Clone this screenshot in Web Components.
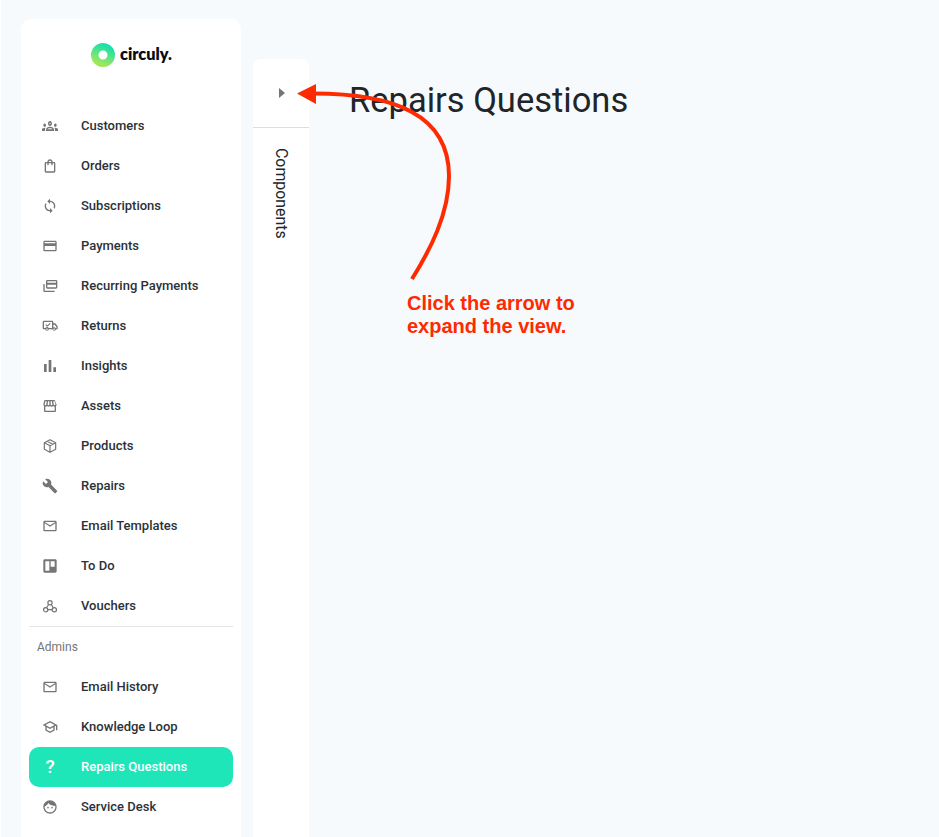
<!DOCTYPE html>
<html lang="en">
<head>
    <meta charset="UTF-8">
    <meta name="viewport" content="width=device-width, initial-scale=1.0">
    <title>Repairs Questions</title>
    <style>
        html, body {
            margin: 0;
            height: 100%;
            background: #f7fafc;
            font-family: Roboto, "Liberation Sans", sans-serif;
        }
    </style>
</head>
<body>
    <app-shell>
        <side-bar slot="sidebar">
            <brand-logo slot="brand"></brand-logo>
            <nav-item icon="groups">Customers</nav-item>
            <nav-item icon="bag">Orders</nav-item>
            <nav-item icon="sync">Subscriptions</nav-item>
            <nav-item icon="card">Payments</nav-item>
            <nav-item icon="cards">Recurring Payments</nav-item>
            <nav-item icon="truck">Returns</nav-item>
            <nav-item icon="bars">Insights</nav-item>
            <nav-item icon="store">Assets</nav-item>
            <nav-item icon="box">Products</nav-item>
            <nav-item icon="wrench">Repairs</nav-item>
            <nav-item icon="mail">Email Templates</nav-item>
            <nav-item icon="board">To Do</nav-item>
            <nav-item icon="hook">Vouchers</nav-item>
            <nav-section>Admins</nav-section>
            <nav-item icon="mail">Email History</nav-item>
            <nav-item icon="school">Knowledge Loop</nav-item>
            <nav-item icon="question" active>Repairs Questions</nav-item>
            <nav-item icon="face">Service Desk</nav-item>
        </side-bar>
        <components-rail slot="rail">Components</components-rail>
        <page-main slot="main">Repairs Questions</page-main>
        <arrow-note slot="note"></arrow-note>
    </app-shell>

    <script>
        const ICONS = {
            groups: '<g transform="translate(0 -3) scale(1 1.25)"><path d="M4 13c1.1 0 2-.9 2-2s-.9-2-2-2-2 .9-2 2 .9 2 2 2zm1.13 1.1C4.76 14.04 4.39 14 4 14c-.99 0-1.93.21-2.78.58C.48 14.9 0 15.62 0 16.43V18h4.5v-1.61c0-.83.23-1.61.63-2.29zM20 13c1.1 0 2-.9 2-2s-.9-2-2-2-2 .9-2 2 .9 2 2 2zm4 3.43c0-.81-.48-1.53-1.22-1.85-.85-.37-1.79-.58-2.78-.58-.39 0-.76.04-1.13.1.4.68.63 1.46.63 2.29V18H24v-1.57zm-7.76-2.78c-1.17-.52-2.61-.9-4.24-.9s-3.07.39-4.24.9C6.68 14.13 6 15.21 6 16.39V18h12v-1.61c0-1.18-.68-2.26-1.76-2.74zM8.07 16c.09-.23.13-.39.91-.69.97-.38 1.99-.56 3.02-.56s2.05.18 3.02.56c.77.3.81.46.91.69H8.07zM12 8c.55 0 1 .45 1 1s-.45 1-1 1-1-.45-1-1 .45-1 1-1m0-2c-1.66 0-3 1.34-3 3s1.34 3 3 3 3-1.34 3-3-1.34-3-3-3z"/></g>',
            bag: '<path d="M18 6h-2c0-2.21-1.79-4-4-4S8 3.79 8 6H6c-1.1 0-2 .9-2 2v12c0 1.1.9 2 2 2h12c1.1 0 2-.9 2-2V8c0-1.1-.9-2-2-2zm-6-2c1.1 0 2 .9 2 2h-4c0-1.1.9-2 2-2zm6 16H6V8h2v2c0 .55.45 1 1 1s1-.45 1-1V8h4v2c0 .55.45 1 1 1s1-.45 1-1V8h2v12z"/>',
            sync: '<path d="M12 4V1L8 5l4 4V6c3.31 0 6 2.69 6 6 0 1.01-.25 1.97-.7 2.8l1.46 1.46C19.54 15.03 20 13.57 20 12c0-4.42-3.58-8-8-8zm0 14c-3.31 0-6-2.69-6-6 0-1.01.25-1.97.7-2.8L5.24 7.74C4.46 8.97 4 10.43 4 12c0 4.42 3.58 8 8 8v3l4-4-4-4v3z"/>',
            card: '<path d="M20 4H4c-1.11 0-1.99.89-1.99 2L2 18c0 1.11.89 2 2 2h16c1.11 0 2-.89 2-2V6c0-1.11-.89-2-2-2zm0 14H4v-6h16v6zm0-10H4V6h16v2z"/>',
            cards: '<path d="M4 9H2v10c0 1.1.9 2 2 2h15v-2H4V9z"/><path d="M21 3H8c-1.1 0-2 .9-2 2v9c0 1.1.9 2 2 2h13c1.1 0 2-.9 2-2V5c0-1.1-.9-2-2-2zm0 11H8v-4h13v4zm0-7H8V5h13v2z"/>',
            truck: '<path d="M3 4h12c1.1 0 2 .9 2 2v2h3l3.5 4.5V17h-2.2a2.9 2.9 0 0 1-5.6 0H10.3a2.9 2.9 0 0 1-5.6 0H3c-1.1 0-2-.9-2-2V6c0-1.1.9-2 2-2zm0 2v9h1.9a2.9 2.9 0 0 1 5.2 0H15V6H3zm14 4v4.2c.4-.1.8-.2 1.1-.2 1.1 0 2.1.4 2.6 1.2h.8v-2l-2.4-3H17zM7.5 15.7a1.2 1.2 0 1 0 0 2.4 1.2 1.2 0 0 0 0-2.4zm10.7 0a1.2 1.2 0 1 0 0 2.4 1.2 1.2 0 0 0 0-2.4z"/><path d="M8 13.2 5 10.4l1.1-1.1L8 11l3.9-3.6L13 8.5z"/>',
            bars: '<path d="M3 9h4v12H3zM10 3h4v18h-4zM17 14h4v7h-4z"/>',
            store: '<path d="M20.9 8.89l-1.05-4.37c-.22-.9-1-1.52-1.91-1.52H5.05c-.9 0-1.69.63-1.9 1.52L2.1 8.89c-.24 1.02-.02 2.06.62 2.88.08.11.19.19.28.29V19c0 1.1.9 2 2 2h14c1.1 0 2-.9 2-2v-6.94c.09-.09.2-.18.28-.28.64-.82.87-1.87.62-2.89zM18.91 4.99l1.05 4.37c.1.42.01.84-.25 1.17-.14.18-.44.47-.94.47-.61 0-1.14-.49-1.21-1.14L16.98 5l1.93-.01zM13 5h1.96l.54 4.52c.05.39-.07.78-.33 1.07-.22.26-.54.41-.95.41-.67 0-1.22-.59-1.22-1.31V5zM8.49 9.52L9.04 5H11v4.69c0 .72-.55 1.31-1.29 1.31-.34 0-.65-.15-.89-.41-.25-.29-.37-.68-.33-1.07zm-4.45-.16L5.05 5h1.97l-.58 4.86c-.08.65-.6 1.14-1.21 1.14-.49 0-.8-.29-.93-.47-.27-.32-.36-.75-.26-1.17zM5 19v-6.03c.08.01.15.03.23.03.87 0 1.66-.36 2.24-.95.6.6 1.4.95 2.31.95.87 0 1.65-.36 2.23-.93.59.57 1.39.93 2.29.93.84 0 1.64-.35 2.24-.95.58.59 1.37.95 2.24.95.08 0 .15-.02.23-.03V19H5z"/>',
            box: '<path fill="none" stroke="currentColor" stroke-width="1.8" stroke-linejoin="round" d="M12 2.5 20.5 7v10L12 21.5 3.5 17V7zM3.5 7 12 11.5 20.5 7M12 11.5v10M7.7 4.8l8.5 4.5"/>',
            wrench: '<path d="M22.7 19l-9.1-9.1c.9-2.3.4-5-1.5-6.9-2-2-5-2.4-7.4-1.3L9 6 6 9 1.6 4.7C.4 7.1.9 10.1 2.9 12.1c1.9 1.9 4.6 2.4 6.9 1.5l9.1 9.1c.4.4 1 .4 1.4 0l2.3-2.3c.5-.4.5-1.1.1-1.4z"/>',
            mail: '<path d="M20 4H4c-1.1 0-1.99.9-1.99 2L2 18c0 1.1.9 2 2 2h16c1.1 0 2-.9 2-2V6c0-1.1-.9-2-2-2zm0 14H4V8l8 5 8-5v10zm-8-7L4 6h16l-8 5z"/>',
            board: '<path fill-rule="evenodd" d="M4 2h16c1.1 0 2 .9 2 2v16c0 1.1-.9 2-2 2H4c-1.1 0-2-.9-2-2V4c0-1.1.9-2 2-2zm1 3v14h6V5H5zm8 0v8h6V5h-6z"/>',
            hook: '<g fill="none" stroke="currentColor" stroke-width="1.8"><circle cx="12" cy="7" r="3.2"/><circle cx="5.5" cy="17.5" r="3.2"/><circle cx="18.5" cy="17.5" r="3.2"/><path d="M10 9.8 6.5 15M14 9.8l3 5M8.5 17.5h7"/></g>',
            school: '<path d="M12 3 1 9l4 2.18v6L12 21l7-3.82v-6l2-1.09V17h2V9L12 3zm6.82 6L12 12.72 5.18 9 12 5.28 18.82 9zM17 15.99l-5 2.73-5-2.73v-3.72L12 15l5-2.73v3.72z"/>',
            face: '<path d="M9 11.75c-.69 0-1.25.56-1.25 1.25s.56 1.25 1.25 1.25 1.25-.56 1.25-1.25-.56-1.25-1.25-1.25zm6 0c-.69 0-1.25.56-1.25 1.25s.56 1.25 1.25 1.25 1.25-.56 1.25-1.25-.56-1.25-1.25-1.25zM12 2C6.48 2 2 6.48 2 12s4.48 10 10 10 10-4.48 10-10S17.52 2 12 2zm0 18c-4.41 0-8-3.59-8-8 0-.29.02-.58.05-.86 2.36-1.05 4.23-2.98 5.21-5.37C11.07 8.33 14.05 10 17.42 10c.78 0 1.53-.09 2.25-.26.21.71.33 1.47.33 2.26 0 4.41-3.59 8-8 8z"/><path d="M4 11C5 6 9 3 12 3c4 0 7 3 8 7-5 0-9-2-10.7-4.2C8.5 8 6.5 10 4 11z"/>'
        };

        class AppShell extends HTMLElement {
            connectedCallback() {
                this.attachShadow({mode: 'open'});
                this.shadowRoot.innerHTML = `
                <style>
                :host {
                    display: flex;
                    position: relative;
                    height: 100vh;
                    overflow: hidden;
                    box-sizing: border-box;
                    padding: 19px 0 0 20px;
                    border-left: 1px solid #fff;
                }
                </style>
                <slot name="sidebar"></slot>
                <slot name="rail"></slot>
                <slot name="main"></slot>
                <slot name="note"></slot>`;
            }
        }

        class SideBar extends HTMLElement {
            connectedCallback() {
                this.attachShadow({mode: 'open'});
                this.shadowRoot.innerHTML = `
                <style>
                :host {
                    display: block;
                    flex: none;
                    width: 220px;
                    box-sizing: border-box;
                    padding: 0 8px;
                    background: #fff;
                    border-radius: 10px 10px 0 0;
                }
                </style>
                <slot name="brand"></slot>
                <slot></slot>`;
            }
        }

        class BrandLogo extends HTMLElement {
            connectedCallback() {
                this.attachShadow({mode: 'open'});
                this.shadowRoot.innerHTML = `
                <style>
                :host {
                    display: flex;
                    gap: 5px;
                    height: 87px;
                    box-sizing: border-box;
                    padding: 24px 0 0 62px;
                }
                svg { display: block; width: 24px; height: 24px; }
                span {
                    font: 800 16.3px/22px Lato, sans-serif;
                    color: #0b0b12;
                }
                </style>
                <svg viewBox="0 0 24 24">
                    <defs>
                        <linearGradient id="g" x1="0.7" y1="0" x2="0.3" y2="1">
                            <stop offset="0" stop-color="#1fe0a8"/>
                            <stop offset="1" stop-color="#9be85f"/>
                        </linearGradient>
                    </defs>
                    <circle cx="12" cy="12" r="8.25" fill="none" stroke="url(#g)" stroke-width="7.5"/>
                </svg>
                <span>circuly.</span>`;
            }
        }

        class NavItem extends HTMLElement {
            connectedCallback() {
                this.attachShadow({mode: 'open'});
                const name = this.getAttribute('icon');
                const icon = name === 'question'
                    ? '<b>?</b>'
                    : `<svg viewBox="0 0 24 24" fill="currentColor">${ICONS[name]}</svg>`;
                this.shadowRoot.innerHTML = `
                <style>
                :host {
                    display: flex;
                    align-items: center;
                    height: 40px;
                    padding-left: 13px;
                    border-radius: 10px;
                    font: 500 13px/20px Roboto, sans-serif;
                    color: #2b3138;
                }
                :host([active]) {
                    background: #1fe6b9;
                    color: #fff;
                }
                .icon {
                    flex: none;
                    width: 16px;
                    height: 16px;
                    margin-right: 23px;
                    display: flex;
                    align-items: center;
                    justify-content: center;
                    color: #757575;
                }
                :host([active]) .icon { color: #fff; }
                svg { display: block; width: 16px; height: 16px; }
                b { font: 500 19px/16px Roboto, sans-serif; }
                </style>
                <span class="icon">${icon}</span>
                <slot></slot>`;
            }
        }

        class NavSection extends HTMLElement {
            connectedCallback() {
                this.attachShadow({mode: 'open'});
                this.shadowRoot.innerHTML = `
                <style>
                :host {
                    display: flex;
                    align-items: center;
                    height: 40px;
                    padding-left: 8px;
                    border-top: 1px solid #e2e4e6;
                    font: 400 12px/16px Roboto, sans-serif;
                    color: #757575;
                }
                </style>
                <slot></slot>`;
            }
        }

        class ComponentsRail extends HTMLElement {
            connectedCallback() {
                this.attachShadow({mode: 'open'});
                this.shadowRoot.innerHTML = `
                <style>
                :host {
                    display: block;
                    flex: none;
                    width: 56px;
                    margin: 40px 0 0 12px;
                    background: #fff;
                    border-radius: 8px 8px 0 0;
                }
                .toggle {
                    display: flex;
                    align-items: center;
                    justify-content: center;
                    height: 68px;
                    border-bottom: 1px solid #dcdee0;
                }
                .toggle i {
                    display: block;
                    margin-left: 2px;
                    border-left: 6px solid #757575;
                    border-top: 5px solid transparent;
                    border-bottom: 5px solid transparent;
                }
                .label {
                    display: block;
                    padding-top: 20px;
                    margin-left: 18px;
                    writing-mode: vertical-rl;
                    font: 400 15.9px/20px Roboto, sans-serif;
                    color: #212529;
                }
                </style>
                <div class="toggle"><i></i></div>
                <span class="label"><slot></slot></span>`;
            }
        }

        class PageMain extends HTMLElement {
            connectedCallback() {
                this.attachShadow({mode: 'open'});
                this.shadowRoot.innerHTML = `
                <style>
                :host {
                    display: block;
                    flex: 1;
                    padding: 60px 0 0 40px;
                    color: #212529;
                }
                h1 {
                    margin: 0;
                    font: 400 34.5px/42px Roboto, sans-serif;
                }
                </style>
                <h1><slot></slot></h1>`;
            }
        }

        // the red callout sits over the rail and the title, so it is the one absolute piece
        class ArrowNote extends HTMLElement {
            connectedCallback() {
                this.attachShadow({mode: 'open'});
                this.shadowRoot.innerHTML = `
                <style>
                :host {
                    position: absolute;
                    left: 295px;
                    top: 84px;
                    width: 290px;
                    height: 260px;
                    color: #fe2a00;
                }
                svg { position: absolute; left: 0; top: 0; }
                p {
                    position: absolute;
                    left: 111px;
                    top: 208px;
                    margin: 0;
                    font: 700 20px/23px "Liberation Sans", Arial, sans-serif;
                    white-space: nowrap;
                }
                </style>
                <svg width="170" height="200" viewBox="0 0 170 200" fill="none">
                    <path d="M116 195C134 166 153 130 153 92C153 31 99 9 14 9.5" stroke="currentColor" stroke-width="4"/>
                    <path d="M1 9.5 20 0V20z" fill="currentColor"/>
                </svg>
                <p>Click the arrow to<br>expand the view.</p>`;
            }
        }

        customElements.define('app-shell', AppShell);
        customElements.define('side-bar', SideBar);
        customElements.define('brand-logo', BrandLogo);
        customElements.define('nav-item', NavItem);
        customElements.define('nav-section', NavSection);
        customElements.define('components-rail', ComponentsRail);
        customElements.define('page-main', PageMain);
        customElements.define('arrow-note', ArrowNote);
    </script>
</body>
</html>
